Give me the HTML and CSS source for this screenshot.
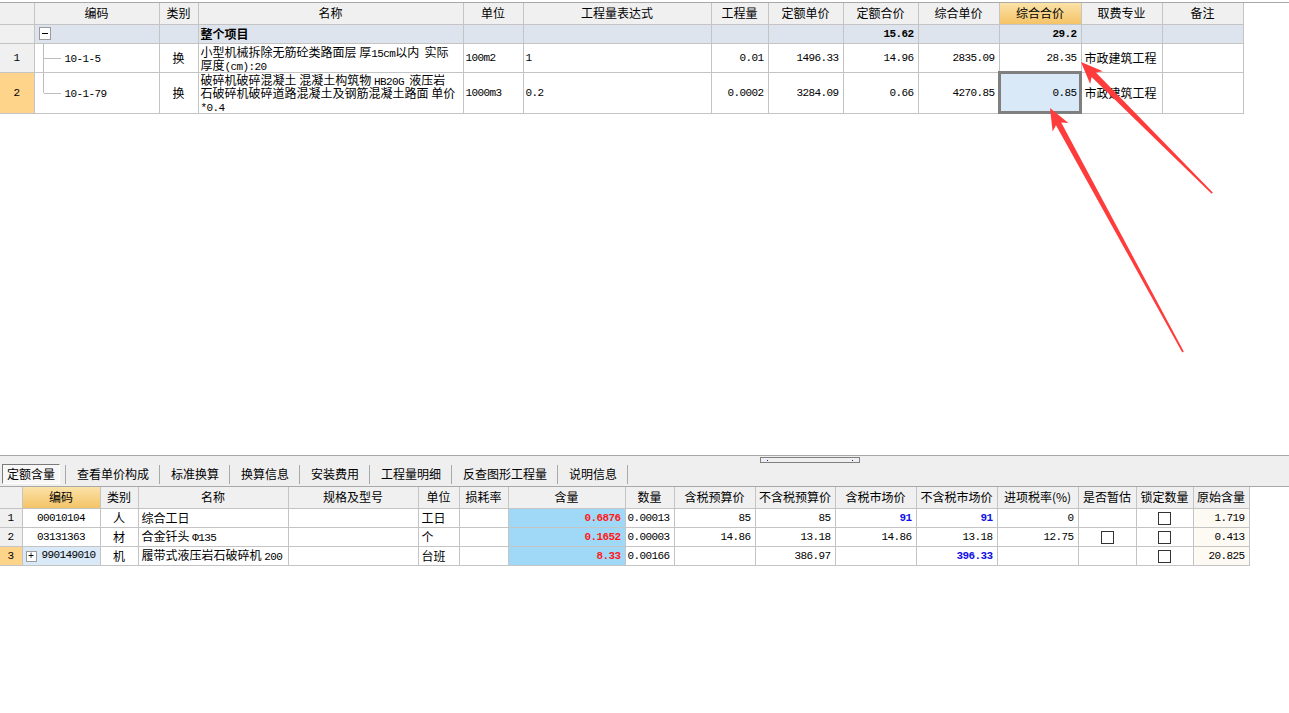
FILE: index.html
```html
<!DOCTYPE html>
<html lang="zh">
<head>
<meta charset="utf-8">
<link rel="stylesheet" href="styles.css">
</head>
<body>
<div class="app">
  <div class="top-pane">
    <table class="grid top-grid">
      <colgroup>
        <col style="width:34px"><col style="width:125px"><col style="width:39px"><col style="width:265px"><col style="width:60px"><col style="width:188px"><col style="width:57px"><col style="width:75px"><col style="width:75px"><col style="width:81px"><col style="width:82px"><col style="width:81px"><col style="width:81px">
      </colgroup>
      <thead>
        <tr class="hrow">
          <th></th><th>编码</th><th>类别</th><th>名称</th><th>单位</th><th>工程量表达式</th><th>工程量</th><th>定额单价</th><th>定额合价</th><th>综合单价</th><th class="hl">综合合价</th><th>取费专业</th><th>备注</th>
        </tr>
      </thead>
      <tbody>
        <tr class="row0">
          <td class="rn"></td>
          <td class="tree-root"><span class="minus-box"></span></td>
          <td></td>
          <td class="bold-cjk">整个项目</td>
          <td></td><td></td><td></td><td></td>
          <td class="num bold">15.62</td>
          <td></td>
          <td class="num bold">29.2</td>
          <td></td><td></td>
        </tr>
        <tr class="row1">
          <td class="rn">1</td>
          <td class="tree mid"><span class="code">10-1-5</span></td>
          <td class="ctr">换</td>
          <td class="name"><span class="l">小型机械拆除无筋砼类路面层 厚<span class="mono-in">15cm</span>以内  实际</span><span class="l">厚度<span class="mono-in">(cm):20</span></span></td>
          <td class="mono">100m2</td>
          <td class="mono">1</td>
          <td class="num">0.01</td>
          <td class="num">1496.33</td>
          <td class="num">14.96</td>
          <td class="num">2835.09</td>
          <td class="num">28.35</td>
          <td class="txt">市政建筑工程</td>
          <td></td>
        </tr>
        <tr class="row2">
          <td class="rn active">2</td>
          <td class="tree last"><span class="code">10-1-79</span></td>
          <td class="ctr">换</td>
          <td class="name"><span class="l">破碎机破碎混凝土 混凝土构筑物 <span class="mono-in">HB20G</span>  液压岩</span><span class="l">石破碎机破碎道路混凝土及钢筋混凝土路面 单价</span><span class="l"><span class="mono-in">*0.4</span></span></td>
          <td class="mono">1000m3</td>
          <td class="mono">0.2</td>
          <td class="num">0.0002</td>
          <td class="num">3284.09</td>
          <td class="num">0.66</td>
          <td class="num">4270.85</td>
          <td class="num sel">0.85</td>
          <td class="txt">市政建筑工程</td>
          <td></td>
        </tr>
      </tbody>
    </table>
  </div>

  <div class="bottom-pane">
    <div class="grip"><span class="dot"></span><span class="dot"></span></div>
    <div class="tabs">
      <span class="tab on">定额含量</span><span class="sep"></span>
      <span class="tab">查看单价构成</span><span class="sep"></span>
      <span class="tab">标准换算</span><span class="sep"></span>
      <span class="tab">换算信息</span><span class="sep"></span>
      <span class="tab">安装费用</span><span class="sep"></span>
      <span class="tab">工程量明细</span><span class="sep"></span>
      <span class="tab">反查图形工程量</span><span class="sep"></span>
      <span class="tab">说明信息</span><span class="sep"></span>
    </div>
    <div class="bottom-body">
      <table class="grid bot-grid">
        <colgroup>
          <col style="width:22px"><col style="width:78px"><col style="width:38px"><col style="width:150px"><col style="width:130px"><col style="width:41px"><col style="width:49px"><col style="width:117px"><col style="width:49px"><col style="width:81px"><col style="width:80px"><col style="width:81px"><col style="width:81px"><col style="width:81px"><col style="width:58px"><col style="width:57px"><col style="width:56px">
        </colgroup>
        <thead>
          <tr class="hrow">
            <th></th><th class="hl">编码</th><th>类别</th><th>名称</th><th>规格及型号</th><th>单位</th><th>损耗率</th><th>含量</th><th>数量</th><th>含税预算价</th><th>不含税预算价</th><th>含税市场价</th><th>不含税市场价</th><th>进项税率(%)</th><th>是否暂估</th><th>锁定数量</th><th>原始含量</th>
          </tr>
        </thead>
        <tbody>
          <tr>
            <td class="rn">1</td>
            <td class="mono ctr">00010104</td>
            <td class="ctr">人</td>
            <td class="txt">综合工日</td>
            <td></td>
            <td class="txt">工日</td>
            <td></td>
            <td class="num red qty">0.6876</td>
            <td class="mono">0.00013</td>
            <td class="num">85</td>
            <td class="num">85</td>
            <td class="num blue">91</td>
            <td class="num blue">91</td>
            <td class="num">0</td>
            <td></td>
            <td class="ctr"><span class="cb"></span></td>
            <td class="num orig">1.719</td>
          </tr>
          <tr>
            <td class="rn">2</td>
            <td class="mono ctr">03131363</td>
            <td class="ctr">材</td>
            <td class="txt">合金钎头 <span class="mono-in">Φ135</span></td>
            <td></td>
            <td class="txt">个</td>
            <td></td>
            <td class="num red qty">0.1652</td>
            <td class="mono">0.00003</td>
            <td class="num">14.86</td>
            <td class="num">13.18</td>
            <td class="num">14.86</td>
            <td class="num">13.18</td>
            <td class="num">12.75</td>
            <td class="ctr"><span class="cb"></span></td>
            <td class="ctr"><span class="cb"></span></td>
            <td class="num orig">0.413</td>
          </tr>
          <tr>
            <td class="rn active">3</td>
            <td class="mono code-sel"><span class="plus-box">+</span>990149010</td>
            <td class="ctr">机</td>
            <td class="txt">履带式液压岩石破碎机 <span class="mono-in">200</span></td>
            <td></td>
            <td class="txt">台班</td>
            <td></td>
            <td class="num red qty">8.33</td>
            <td class="mono">0.00166</td>
            <td></td>
            <td class="num">386.97</td>
            <td></td>
            <td class="num blue">396.33</td>
            <td></td>
            <td></td>
            <td class="ctr"><span class="cb"></span></td>
            <td class="num orig">20.825</td>
          </tr>
        </tbody>
      </table>
    </div>
  </div>

  <svg class="arrows" width="1289" height="713" viewBox="0 0 1289 713" xmlns="http://www.w3.org/2000/svg">
    <polygon fill="#ff3c3c" points="1081,62 1090.2,83.9 1091.6,76.9 1211.6,193.8 1212.8,192.6 1095.9,72.6 1102.9,71.2"/>
    <polygon fill="#ff3c3c" points="1050,108 1052.6,131.6 1056.0,125.2 1182.3,352.4 1183.8,351.6 1061.2,122.4 1068.4,123.0"/>
  </svg>
</div>
</body>
</html>
```
FILE: styles.css
```css
html, body {
  margin: 0;
  padding: 0;
  background: #ffffff;
}

body {
  font-family: "Noto Sans CJK SC", "Noto Sans", sans-serif;
  font-size: 12px;
  color: #000;
}

.app {
  position: relative;
  width: 1289px;
  height: 713px;
  overflow: hidden;
  display: flex;
  flex-direction: column;
}

.top-pane {
  height: 453px;
  margin-top: 2px;
  border-top: 1px solid #a8a8a8;
  box-sizing: border-box;
}

.grid {
  border-collapse: collapse;
  table-layout: fixed;
}

.top-grid { width: 1243px; }
.bot-grid { width: 1249px; }

.grid th,
.grid td {
  border: 1px solid #c4c4c4;
  padding: 0 2px;
  overflow: hidden;
  white-space: nowrap;
  line-height: 12px;
  box-sizing: border-box;
}

.grid th {
  background: #f0f0f0;
  font-weight: normal;
  text-align: center;
  border-top: none;
}

.grid th.hl {
  background: linear-gradient(#fbe2a8, #f4c366);
}

.grid th:first-child,
.grid td:first-child {
  border-left: none;
}

.top-grid .hrow { height: 21px; }
.row0 { height: 19px; background: #dde4ee; }
.row1 { height: 29px; }
.row2 { height: 41px; }

.rn {
  background: #f0f0f0;
  text-align: center;
  font-family: "Liberation Mono", monospace;
  font-size: 11px;
}
.row0 .rn { background: #f0f0f0; }
.rn.active { background: #fed38a; }

.num {
  text-align: right;
  padding-right: 4px !important;
  font-family: "Liberation Mono", monospace;
  font-size: 11px;
  letter-spacing: -0.6px;
}

.mono {
  font-family: "Liberation Mono", monospace;
  font-size: 11px;
  letter-spacing: -0.6px;
}

.mono-in {
  font-family: "Liberation Mono", monospace;
  font-size: 11px;
  letter-spacing: -0.6px;
  line-height: 1;
}

.bold { font-weight: bold; }
.bold-cjk { font-weight: bold; font-size: 12px; }

.ctr { text-align: center; }

.txt { padding-left: 3px !important; }

.name {
  padding-left: 2px !important;
  vertical-align: middle;
}
.name .l {
  display: block;
  white-space: pre;
  line-height: 13px;
  height: 13px;
}

/* tree column */
.tree-root { position: relative; }
.minus-box {
  display: block;
  width: 10px;
  height: 11px;
  margin-left: 2px;
  border: 1px solid #9a9a9a;
  background: #fff;
  position: relative;
}
.minus-box::after {
  content: "";
  position: absolute;
  left: 2px;
  right: 2px;
  top: 5px;
  height: 1px;
  background: #000;
}

.tree {
  position: relative;
  padding-left: 30px !important;
}
.tree::before {
  content: "";
  position: absolute;
  left: 8px;
  top: 0;
  width: 1px;
  background: #bdbdbd;
}
.tree.mid::before { bottom: 0; }
.tree.last::before { height: 50%; }
.tree::after {
  content: "";
  position: absolute;
  left: 9px;
  top: 50%;
  width: 17px;
  height: 1px;
  background: #bdbdbd;
}
.code {
  font-family: "Liberation Mono", monospace;
  font-size: 11px;
  letter-spacing: -0.6px;
}

.sel {
  background: #d9e9f8;
  outline: 3px solid #7f7f7f;
  outline-offset: -2px;
}

/* bottom pane */
.bottom-pane {
  flex: 1;
  display: flex;
  flex-direction: column;
  border-top: 1px solid #a8a8a8;
  background: #efefef;
}

.grip {
  margin-top: 1px;
  margin-left: 760px;
  width: 100px;
  height: 6px;
  box-sizing: border-box;
  border: 1px solid #808080;
  display: flex;
  justify-content: space-between;
  align-items: center;
  padding: 0 6px;
}
.grip .dot {
  width: 1px;
  height: 1px;
  background: #1a1a8a;
}

.tabs {
  display: flex;
  align-items: center;
  height: 20px;
  margin-top: 1px;
  margin-bottom: 2px;
  padding-left: 2px;
}
.tab {
  padding: 0 10px 0 11px;
  line-height: 18px;
  white-space: nowrap;
}
.tab.on {
  padding: 0 4px;
  height: 18px;
  border: 1px solid;
  border-color: #7a7a7a #ffffff #ffffff #7a7a7a;
  background: #f7f7f7;
  margin-right: 5px;
}
.sep {
  width: 1px;
  height: 19px;
  background: #a8a8a8;
}

.bottom-body {
  flex: 1;
  background: #ffffff;
  border-top: 1px solid #a8a8a8;
}

.bot-grid .hrow { height: 21px; }
.bot-grid tbody tr { height: 19px; }

.bot-grid td.mono { padding-left: 2px; }

.qty {
  background: #a0d9f7;
  font-weight: bold;
}
.red { color: #ff1a1a; }
.blue { color: #1010e6; font-weight: bold; }
.orig { background: #fdfaf4; }

.code-sel {
  background: #d9e9f8;
  padding-left: 3px !important;
}
.plus-box {
  display: inline-block;
  width: 9px;
  height: 9px;
  line-height: 9px;
  border: 1px solid #9a9a9a;
  background: #fff;
  text-align: center;
  font-size: 10px;
  letter-spacing: 0;
  margin-right: 5px;
  vertical-align: -1px;
}

.cb {
  display: inline-block;
  width: 11px;
  height: 11px;
  border: 1px solid #333;
  background: #fff;
  vertical-align: middle;
}

.arrows {
  position: absolute;
  left: 0;
  top: 0;
  pointer-events: none;
}
```
